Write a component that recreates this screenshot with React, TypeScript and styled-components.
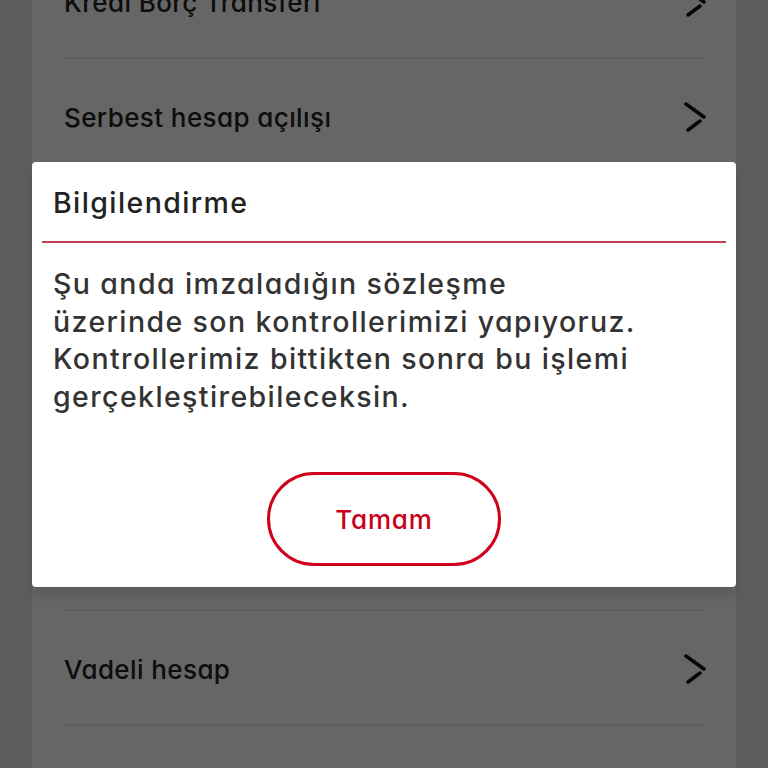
import React from "react";
import styled, { createGlobalStyle } from "styled-components";

const GlobalStyle = createGlobalStyle`
  html, body { margin: 0; padding: 0; }
  body {
    background: #e8e8e8;
    font-family: Inter, "Noto Sans", sans-serif;
    font-feature-settings: "cv11" 1;
    -webkit-font-smoothing: antialiased;
  }
`;

const Page = styled.div`
  position: relative;
  width: 768px;
  height: 768px;
  overflow: hidden;
  background: #e8e8e8;
`;

const Card = styled.div`
  margin: -56px 32px 0;
  background: #ffffff;
  padding: 0 32px;
  display: flex;
  flex-direction: column;
`;

const Row = styled.div<{ $h: number }>`
  height: ${(p) => p.$h}px;
  padding-top: 3px;
  display: flex;
  align-items: center;
  justify-content: space-between;
  border-bottom: 2px solid #ececec;
  box-sizing: border-box;
`;

const RowLabel = styled.span`
  font-size: 26px;
  font-weight: 500;
  color: #222;
  letter-spacing: 0.4px;
`;

const Chevron = styled.svg`
  width: 26px;
  height: 30px;
  margin-right: -4px;
  flex: none;
`;

const Overlay = styled.div`
  position: absolute;
  inset: 0;
  background: rgba(0, 0, 0, 0.6);
  display: flex;
  flex-direction: column;
  align-items: center;
  padding-top: 162px;
  box-sizing: border-box;
`;

const Dialog = styled.div`
  width: 704px;
  background: #fff;
  border-radius: 4px;
  box-shadow: 0 10px 14px rgba(0, 0, 0, 0.12);
  display: flex;
  flex-direction: column;
  padding-bottom: 21px;
`;

const Header = styled.div`
  padding: 24px 21px 22px;
  font-size: 28.5px;
  line-height: 33px;
  font-weight: 500;
  letter-spacing: 1.4px;
  color: #222;
`;

const RedRule = styled.div`
  height: 2px;
  margin: 0 10px;
  background: #c0414f;
`;

const Body = styled.p`
  margin: 0;
  padding: 22px 21px 0;
  font-size: 28.5px;
  line-height: 37.5px;
  font-weight: 500;
  letter-spacing: 1.4px;
  color: #333;
`;

const Actions = styled.div`
  display: flex;
  justify-content: center;
  padding-top: 57px;
`;

const OutlineButton = styled.button`
  width: 234px;
  height: 94px;
  border: 3px solid #d0021b;
  border-radius: 47px;
  background: #fff;
  color: #c8001a;
  font-family: Inter, "Noto Sans", sans-serif;
  font-feature-settings: "cv11" 1;
  font-size: 26px;
  font-weight: 500;
  letter-spacing: 0.8px;
  padding: 0;
  cursor: pointer;
`;

const ChevronIcon = () => (
  <Chevron viewBox="0 0 26 30" fill="none">
    <path d="M4 2 L22 15" stroke="#111" strokeWidth="3.5" strokeLinecap="round" />
    <path d="M18 19 L6 28" stroke="#111" strokeWidth="3.5" strokeLinecap="round" />
  </Chevron>
);

const rows = [
  { label: "Kredi Borç Transferi", h: 115 },
  { label: "Serbest hesap açılışı", h: 115 },
  { label: "Döviz hesabı açılışı", h: 110 },
  { label: "Altın hesabı açılışı", h: 110 },
  { label: "Yatırım hesabı açılışı", h: 110 },
  { label: "Hesap kapatma", h: 107 },
  { label: "Vadeli hesap", h: 115 },
  { label: "Birikim hesabı", h: 115 },
];

export default function App() {
  return (
    <>
      <GlobalStyle />
      <Page>
        <Card>
          {rows.map((r) => (
            <Row key={r.label} $h={r.h}>
              <RowLabel>{r.label}</RowLabel>
              <ChevronIcon />
            </Row>
          ))}
        </Card>
        <Overlay>
          <Dialog>
            <Header>Bilgilendirme</Header>
            <RedRule />
            <Body>
              Şu anda imzaladığın sözleşme
              <br />
              üzerinde son kontrollerimizi yapıyoruz.
              <br />
              Kontrollerimiz bittikten sonra bu işlemi
              <br />
              gerçekleştirebileceksin.
            </Body>
            <Actions>
              <OutlineButton>Tamam</OutlineButton>
            </Actions>
          </Dialog>
        </Overlay>
      </Page>
    </>
  );
}
